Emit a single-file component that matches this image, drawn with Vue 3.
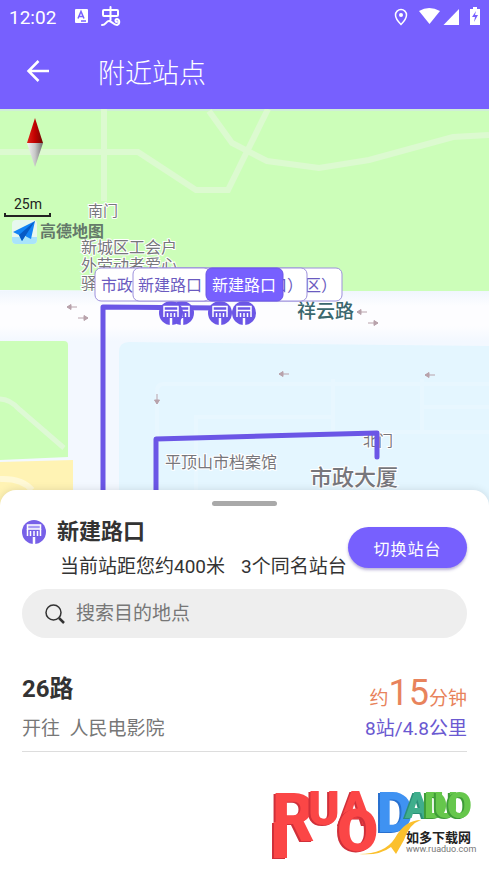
<template>
  <div class="page">
    <header class="header">
      <div class="status-bar">
        <span class="clock">12:02</span>
        <svg class="status-left" viewBox="0 0 48 22" aria-hidden="true">
          <path d="M2 3h11a1 1 0 0 1 1 1v12a1 1 0 0 1-1 1H2a1 1 0 0 1-1-1V4a1 1 0 0 1 1-1z" fill="#fff" />
          <path d="M4 12.500 7 5.500l3 7M5 10.500h4M7 15h5" fill="none" stroke="#7760fe" stroke-width="1.500" />
          <path
            d="M30 4h13a1 1 0 0 1 1 1v4a1 1 0 0 1-1 1H30a1 1 0 0 1-1-1V5a1 1 0 0 1 1-1zM36.500 1v13M28 19c4 0 4-4 7-4s4 4 8 4c3-1 3-5 0-6-2 0-2 3 0 3"
            fill="none"
            stroke="#fff"
            stroke-width="2"
            stroke-linecap="round"
          />
        </svg>
        <svg class="status-right" viewBox="0 0 88 20" aria-hidden="true">
          <path
            d="M8 2.500a5.500 5.500 0 0 0-5.500 5.500c0 4 5.500 9.500 5.500 9.500s5.500-5.500 5.500-9.500A5.500 5.500 0 0 0 8 2.500z"
            fill="none"
            stroke="#fff"
            stroke-width="1.500"
          />
          <circle cx="8" cy="8" r="2" fill="#fff" />
          <path d="M26 4Q36-2 47 4L36.500 17z" fill="#fff" />
          <path d="M66 2v16H50.500z" fill="#fff" />
          <path d="M77 2h3V0h4v2h3v16H77z" fill="#fff" />
          <path d="M83 4l-4 6h3l-1 5 4-7h-3z" fill="#7760fe" />
        </svg>
      </div>
      <div class="app-bar">
        <button class="back" type="button" aria-label="返回">
          <svg viewBox="0 0 24 24" aria-hidden="true">
            <path d="M23 11H3M12.500 1 2.500 11l10 10" fill="none" stroke="#fff" stroke-width="2.500" />
          </svg>
        </button>
        <h1>附近站点</h1>
      </div>
    </header>

    <svg class="map" viewBox="0 0 489 400" preserveAspectRatio="xMidYMin slice">
      <defs>
        <linearGradient id="road" x1="0" y1="0" x2="0" y2="1">
          <stop offset="0" stop-color="#f0f6fd" />
          <stop offset="0.3" stop-color="#fdfdff" />
          <stop offset="0.7" stop-color="#fdfdff" />
          <stop offset="1" stop-color="#f3f8ff" />
        </linearGradient>
        <linearGradient id="needle-red">
          <stop offset="0" stop-color="#e02418" />
          <stop offset="0.5" stop-color="#c00000" />
          <stop offset="1" stop-color="#6d0a04" />
        </linearGradient>
        <linearGradient id="needle-grey">
          <stop offset="0" stop-color="#f4f4f4" />
          <stop offset="0.5" stop-color="#c8c8c8" />
          <stop offset="1" stop-color="#6f6f6f" />
        </linearGradient>
        <g id="stop">
          <circle r="12" fill="#6b56e6" />
          <path d="M-7-6.500H7v4H-7z" fill="none" stroke="#fff" stroke-width="1.500" />
          <path d="M-7-2v6M-3.500 0v4M0 0v4M3.500 0v4M7-2v6" stroke="#fff" stroke-width="1.500" />
          <path d="M0 5v7" stroke="#fff" stroke-width="2.500" />
        </g>
        <path id="way" d="M-5 0H5M-5 0l4-2.500v5z" fill="#b8a2ab" stroke="#b8a2ab" stroke-width="1" />
      </defs>

      <rect width="489" height="400" fill="#f3f8ff" />
      <path d="M0 0h489v183L0 181z" fill="#ccfeb9" />
      <rect y="182" width="489" height="50" fill="url(#road)" />
      <rect y="0" width="489" height="2" fill="#cfeed8" />

      <g fill="none" stroke="#dcfad0" stroke-width="6">
        <path d="M104 0v92M0 43h138l58 38h32L268 0M209 2l23 32 35 18 52 7 50-8 84-23 36-2" />
      </g>

      <path d="M0 232h64q4 0 4 4v112L0 351z" fill="#ccfeb9" />
      <path d="M0 290q10 0 20 11l44 38" fill="none" stroke="#def9d5" stroke-width="5" />
      <path d="M0 353l73-2v49H0z" fill="#fff3b4" />
      <path d="M0 370q22-1 32 11" fill="none" stroke="#fff9d6" stroke-width="6" />

      <path d="M129 233l360 4v163H119V243q0-10 10-10z" fill="#e4f6ff" />
      <path
        d="M157 380v-98q0-7 7-7h325M196 330v-22h137M333 270v52M422 270v53M422 298h67M335 323h154M196 330v70"
        fill="none"
        stroke="#e8f7ff"
        stroke-width="4"
      />

      <use
        v-for="(arrow, i) in arrows"
        :key="i"
        href="#way"
        :transform="`translate(${arrow.x} ${arrow.y}) rotate(${arrow.angle})`"
      />

      <text
        v-for="place in places"
        :key="place.text"
        :x="place.x"
        :y="place.y"
        :class="['place', place.kind]"
      >{{ place.text }}</text>

      <g fill="none" stroke="#6b56e6" stroke-width="5" stroke-linecap="round" stroke-linejoin="round">
        <path d="M103 400V198l117 1" />
        <path d="M156 400v-70l144-4 77-2v24" />
      </g>

      <use v-for="x in [182, 171, 220, 244]" :key="x" href="#stop" :x="x" y="204" />

      <g v-for="(b, i) in bubbles" :key="i" :class="['bubble', { active: b.active }]">
        <rect :x="b.x" y="159" :width="b.width" height="33" rx="6" />
        <text v-for="t in b.texts" :key="t.text" :x="t.x" y="182">{{ t.text }}</text>
      </g>

      <path d="M35 9l8 25H27z" fill="url(#needle-red)" />
      <path d="M27 34h16l-8 24z" fill="url(#needle-grey)" />

      <text x="14" y="100" class="scale">25m</text>
      <path d="M5 104v3h45v-3" fill="none" stroke="#222" stroke-width="2" />

      <rect x="12" y="111" width="25" height="24" rx="4" fill="#e8f8ee" />
      <path d="M12 128h25v3q0 4-4 4H16q-4 0-4-4z" fill="#a9e4fb" />
      <path d="M35 112L13 123l6 3 3 6 3-5 6 3z" fill="#1384f5" />
      <path d="M35 112L19 126l3 6z" fill="#0759c4" />
      <text x="40" y="128" class="brand">高德地图</text>
    </svg>

    <main class="sheet">
      <div class="handle"></div>

      <section class="station">
        <div class="station-info">
          <div class="station-name">
            <svg viewBox="0 0 24 24" aria-hidden="true">
              <circle cx="12" cy="12" r="12" fill="#7760e8" />
              <path d="M5.500 5h13v4h-13z" fill="#a79af5" stroke="#fff" stroke-width="1.500" />
              <path d="M5.500 9v7M8.500 11v5M12 11v5M15.500 11v5M18.500 9v7" stroke="#fff" stroke-width="1.500" />
              <path d="M12 17v7" stroke="#fff" stroke-width="2.500" />
            </svg>
            <h2>新建路口</h2>
          </div>
          <p class="station-desc">
            <span>当前站距您约400米</span>
            <span>3个同名站台</span>
          </p>
        </div>
        <button class="switch" type="button">切换站台</button>
      </section>

      <label class="search">
        <svg viewBox="0 0 20 20" aria-hidden="true">
          <circle cx="8.500" cy="8.500" r="7.500" fill="none" stroke="#333" stroke-width="1.500" />
          <path d="M14 14l5 5" stroke="#333" stroke-width="2.500" />
        </svg>
        <input v-model="keyword" type="text" placeholder="搜索目的地点" aria-label="搜索目的地点" />
      </label>

      <ul class="lines">
        <li v-for="line in lines" :key="line.name">
          <div class="line-left">
            <h3>{{ line.name }}</h3>
            <p>开往&nbsp; {{ line.to }}</p>
          </div>
          <div class="line-right">
            <p class="eta">约<b>{{ line.minutes }}</b>分钟</p>
            <p class="distance">{{ line.stops }}站/{{ line.km }}公里</p>
          </div>
        </li>
      </ul>

      <svg class="site-logo" viewBox="0 0 210 88" role="img" aria-label="如多下载网">
        <g v-for="(l, i) in letters" :key="i" :class="['letter', l.tone]">
          <rect v-if="l.stem" :x="l.x + 2" y="40" width="13" height="36" />
          <text :x="l.x" :y="l.y" :font-size="l.size">{{ l.char }}</text>
        </g>
        <path d="M92 72q26 0 36-16 10-18 26-18-12 4-17 20l-8 14-5-7q-12 9-32 7z" fill="#fbc02d" />
        <text x="139" y="60" class="site-name">如多下载网</text>
        <text x="139" y="70" class="site-url">www.ruaduo.com</text>
      </svg>
    </main>
  </div>
</template>

<script setup>
import { ref } from 'vue'

const keyword = ref('')

const lines = ref([
  { name: '26路', to: '人民电影院', minutes: 15, stops: 8, km: 4.8 },
])

const places = [
  { text: '南门', x: 88, y: 107, kind: 'small' },
  { text: '新城区工会户', x: 81, y: 144, kind: 'poi' },
  { text: '外劳动者爱心', x: 81, y: 162, kind: 'poi' },
  { text: '驿', x: 81, y: 180, kind: 'poi' },
  { text: '祥云路', x: 297, y: 209, kind: 'street' },
  { text: '平顶山市档案馆', x: 165, y: 359, kind: 'poi' },
  { text: '北门', x: 363, y: 337, kind: 'small' },
  { text: '市政大厦', x: 310, y: 376, kind: 'building' },
]

const arrows = [
  { x: 72, y: 198, angle: 0 },
  { x: 83, y: 209, angle: 180 },
  { x: 362, y: 203, angle: 0 },
  { x: 373, y: 214, angle: 180 },
  { x: 284, y: 265, angle: 0 },
  { x: 430, y: 266, angle: 0 },
  { x: 157, y: 290, angle: 270 },
]

// later bubbles cover the earlier ones
const bubbles = [
  { x: 95, width: 247, texts: [{ text: '市政', x: 101 }, { text: '区）', x: 305 }] },
  { x: 170, width: 137, texts: [{ text: '口）', x: 271 }] },
  { x: 133, width: 77, texts: [{ text: '新建路口', x: 138 }] },
  { x: 206, width: 77, active: true, texts: [{ text: '新建路口', x: 212 }] },
]

const letters = [
  { char: 'R', x: 5, y: 59, size: 66, tone: 'red', stem: true },
  { char: 'U', x: 41, y: 43, size: 48, tone: 'red' },
  { char: 'A', x: 72, y: 43, size: 48, tone: 'red' },
  { char: 'D', x: 110, y: 50, size: 56, tone: 'blue' },
  { char: 'O', x: 70, y: 69, size: 60, tone: 'red' },
  { char: 'A', x: 138, y: 36, size: 36, tone: 'teal' },
  { char: 'D', x: 157, y: 36, size: 36, tone: 'green' },
  { char: 'U', x: 167, y: 36, size: 36, tone: 'green' },
  { char: 'O', x: 180, y: 36, size: 36, tone: 'green' },
]
</script>

<style>
body {
  margin: 0;
  background: #fff;
}
</style>

<style scoped>
.page {
  display: flex;
  flex-direction: column;
  min-height: 100vh;
  font-family: Roboto, 'Noto Sans CJK SC', sans-serif;
  color: #333;
}

h1,
h2,
h3,
p,
ul {
  margin: 0;
  padding: 0;
}

button,
input {
  font-family: inherit;
  border: none;
  padding: 0;
}

.header {
  background: #7760fe;
  color: #fff;
}

.status-bar {
  display: flex;
  align-items: center;
  height: 34px;
  padding: 0 8px 0 9px;
}

.clock {
  font-size: 19px;
}

.status-left {
  width: 48px;
  height: 22px;
  margin-left: 18px;
}

.status-right {
  width: 88px;
  height: 20px;
  margin-left: auto;
}

.app-bar {
  display: flex;
  align-items: center;
  gap: 48px;
  height: 75px;
  padding: 0 26px;
}

.back {
  width: 24px;
  height: 24px;
  background: none;
  cursor: pointer;
}

.back svg {
  display: block;
  width: 24px;
  height: 24px;
}

.app-bar h1 {
  font-size: 27px;
  font-weight: 300;
}

.map {
  display: block;
  width: 100%;
  height: 400px;
}

.place {
  fill: #77777c;
  stroke: #fff;
  stroke-width: 2px;
  paint-order: stroke;
  font-size: 16px;
}

.place.small {
  font-size: 15px;
}

.place.street {
  fill: #3b686e;
  font-size: 19px;
  font-weight: 500;
}

.place.building {
  font-size: 22px;
  font-weight: 500;
}

.bubble rect {
  fill: #fff;
  stroke: #9d90dc;
  stroke-width: 1px;
}

.bubble text {
  fill: #6b5bc0;
  font-size: 16px;
}

.bubble.active rect {
  fill: #7760fe;
  stroke: #6b56e6;
}

.bubble.active text {
  fill: #fff;
}

.scale {
  fill: #222;
  font-size: 14px;
}

.brand {
  fill: #64796a;
  font-size: 16px;
  font-weight: 700;
}

.sheet {
  position: relative;
  display: flex;
  flex: 1;
  flex-direction: column;
  margin-top: -19px;
  padding: 11px 22px 0;
  border-radius: 16px 16px 0 0;
  background: #fff;
  box-shadow: 0 0 8px rgba(0, 0, 0, 0.12);
}

.handle {
  align-self: center;
  width: 65px;
  height: 5px;
  border-radius: 3px;
  background: #a9a9a9;
}

.station {
  display: flex;
  align-items: flex-start;
  justify-content: space-between;
  margin-top: 10px;
}

.station-name {
  display: flex;
  align-items: center;
  gap: 11px;
  height: 32px;
}

.station-name svg {
  width: 24px;
  height: 24px;
}

.station-name h2 {
  font-size: 22px;
  line-height: 34px;
}

.station-desc {
  display: flex;
  gap: 16px;
  margin-top: 2px;
  padding-left: 38px;
  font-size: 19px;
  line-height: 34px;
  white-space: nowrap;
}

.switch {
  flex: none;
  width: 119px;
  height: 41px;
  margin-top: 11px;
  border-radius: 21px;
  background: #7760fe;
  box-shadow: 0 2px 3px rgba(60, 40, 140, 0.35);
  color: #fff;
  font-size: 16px;
  letter-spacing: 1px;
  cursor: pointer;
}

.search {
  display: flex;
  align-items: center;
  gap: 11px;
  height: 49px;
  margin-top: 5px;
  padding: 0 23px;
  border-radius: 25px;
  background: #eee;
}

.search svg {
  flex: none;
  width: 20px;
  height: 20px;
}

.search input {
  flex: 1;
  min-width: 0;
  background: none;
  outline: none;
  color: #333;
  font-size: 19px;
  line-height: 32px;
}

.search input::placeholder {
  color: #777;
  opacity: 1;
}

.lines {
  margin-top: 35px;
  list-style: none;
}

.lines li {
  display: flex;
  justify-content: space-between;
  padding-bottom: 6px;
  border-bottom: 1px solid #ddd;
  font-size: 19px;
  line-height: 32px;
}

.line-left {
  display: flex;
  flex-direction: column;
  gap: 8px;
  color: #777;
}

.line-left h3 {
  color: #333;
  font-size: 24px;
  line-height: 32px;
}

.line-right {
  text-align: right;
}

.eta {
  height: 40px;
  color: #e8835c;
  line-height: 40px;
}

.eta b {
  font-size: 36px;
  font-weight: 400;
}

.distance {
  color: #6a59d1;
}

.site-logo {
  align-self: flex-end;
  width: 210px;
  height: 88px;
  margin: 30px -10px 0 0;
  overflow: visible;
}

.letter {
  font-weight: 900;
}

.letter.red {
  fill: #fb4646;
  filter: drop-shadow(-2px 1px 0 #d0303a);
}

.letter.blue {
  fill: #3f92f2;
  filter: drop-shadow(-2px 1px 0 #2870cf);
}

.letter.teal {
  fill: #3fae8c;
  filter: drop-shadow(-2px 1px 0 #2b8f78);
}

.letter.green {
  fill: #66c74c;
  filter: drop-shadow(-2px 1px 0 #3e9c38);
}

.site-name {
  fill: #222;
  font-size: 13px;
  font-weight: 700;
}

.site-url {
  fill: #777;
  font-size: 9px;
}
</style>
